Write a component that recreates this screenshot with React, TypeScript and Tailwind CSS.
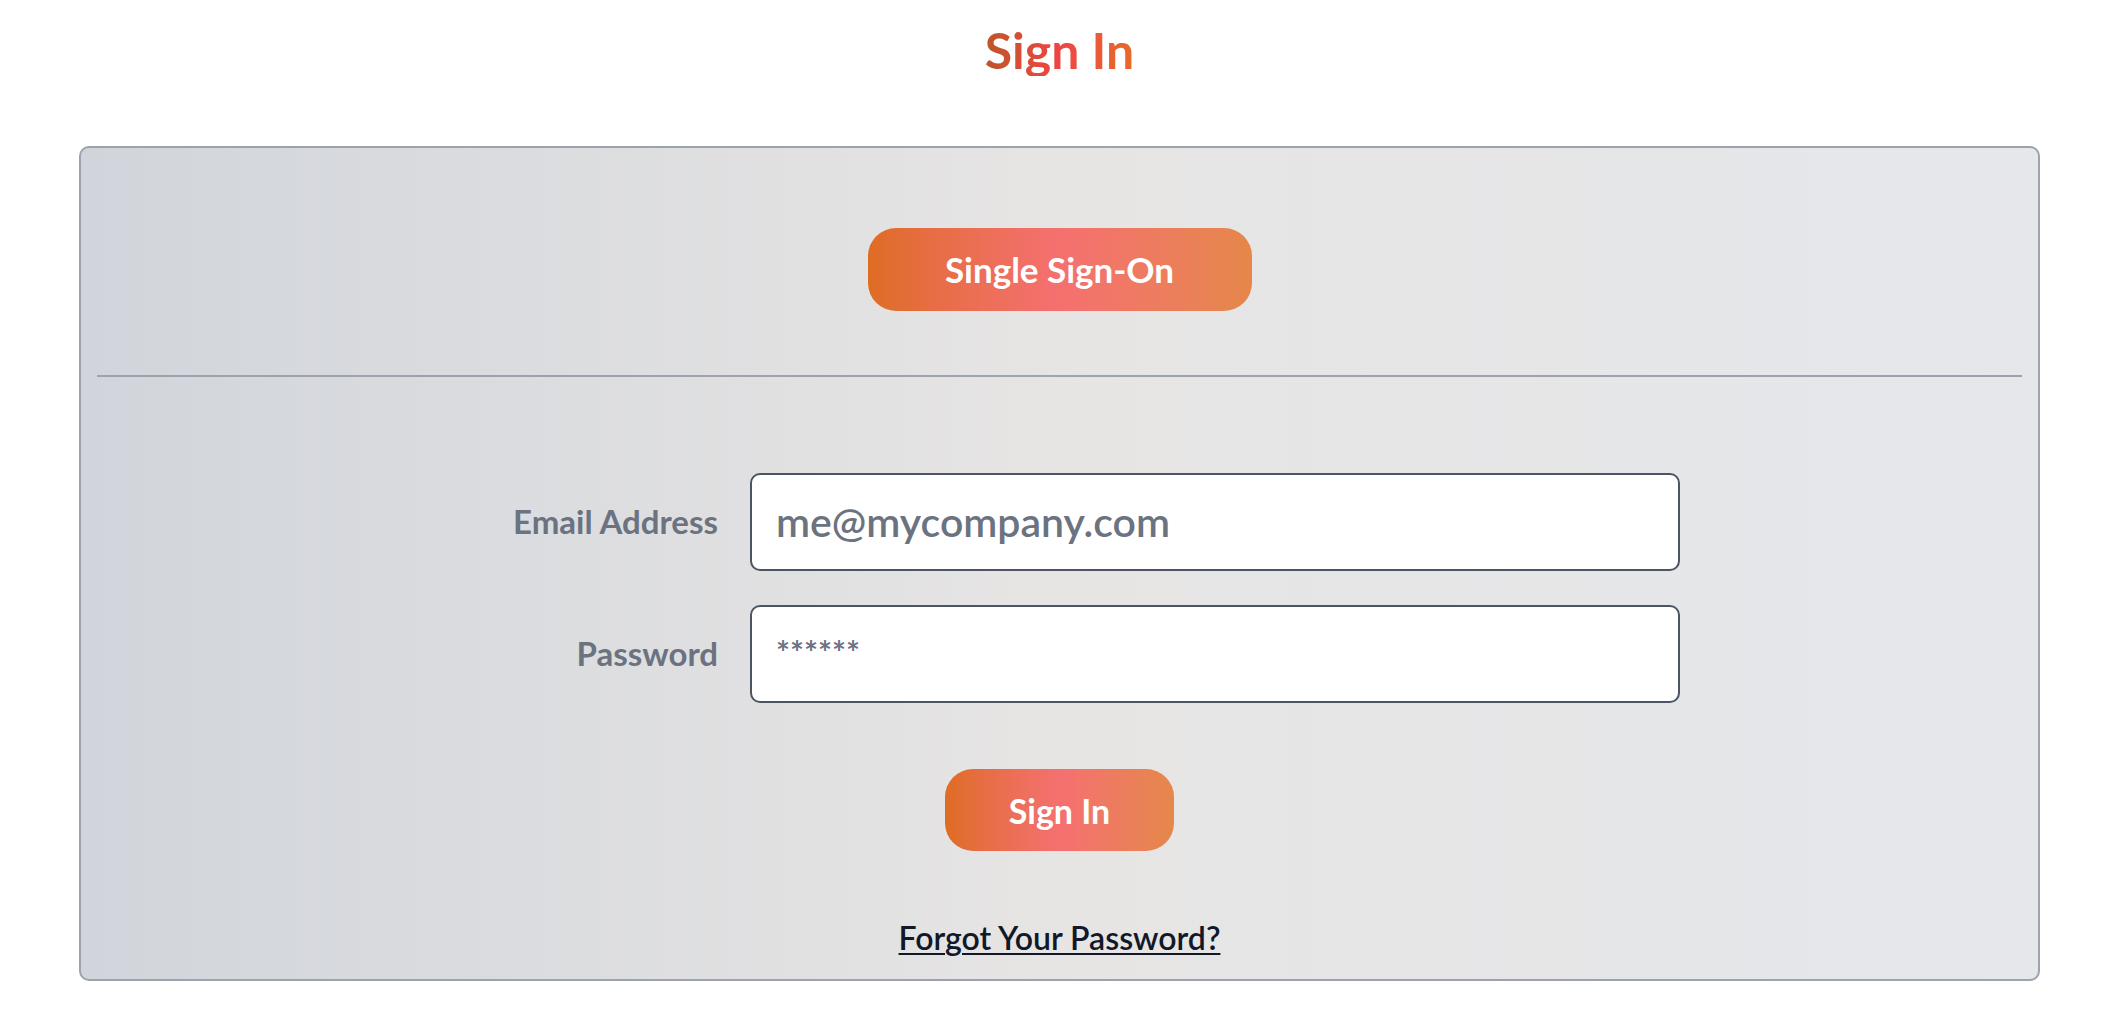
import React from "react";

const font = { fontFamily: "Lato, 'Open Sans', sans-serif" };

export default function App() {
  return (
    <div className="min-h-screen w-full bg-white" style={font}>
      <div className="ml-[79px] w-[1961px] flex flex-col items-center">
        <h1 className="mt-[24px] h-[52px] text-[50px] leading-[52px] font-bold bg-gradient-to-r from-[#bf5428] via-[#ee4444] to-[#e86a25] bg-clip-text text-transparent">
          Sign In
        </h1>
        <div className="mt-[70px] w-full h-[835px] rounded-[10px] border-2 border-[#9ca3af] bg-gradient-to-r from-[#d1d5db] via-[#e7e5e4] to-[#e5e7eb] flex flex-col items-center">
          <button className="mt-[80px] w-[384px] h-[83px] rounded-[28px] bg-gradient-to-r from-[#df6c22] via-[#f57070] to-[#e5874a] text-white text-[35px] font-bold">
            Single Sign-On
          </button>
          <div className="mt-[64px] h-[2px] self-stretch mx-[16px] bg-[#9ca3af]" />
          <div className="mt-[96px] flex flex-col gap-[34px]">
            <div className="flex items-center gap-[32px]">
              <label className="w-[279px] text-right text-[33px] font-bold text-[#6b7280]">
                Email Address
              </label>
              <div className="w-[930px] h-[98px] rounded-[10px] border-2 border-[#4b5563] bg-white flex items-center pl-[24px] text-[41px] font-semibold text-[#6b7280]">
                me@mycompany.com
              </div>
            </div>
            <div className="flex items-center gap-[32px]">
              <label className="w-[279px] text-right text-[33px] font-bold text-[#6b7280]">
                Password
              </label>
              <div className="w-[930px] h-[98px] rounded-[10px] border-2 border-[#4b5563] bg-white flex items-center pl-[24px] pb-[2px] text-[33px] font-bold text-[#6b7280]">
                ******
              </div>
            </div>
          </div>
          <button className="mt-[66px] w-[229px] h-[82px] rounded-[28px] bg-gradient-to-r from-[#df6c22] via-[#f57070] to-[#e5874a] text-white text-[34px] font-bold">
            Sign In
          </button>
          <a
            href="#"
            className="mt-[69px] text-[32px] leading-[36px] font-semibold text-[#111827] underline underline-offset-[3px] decoration-[2px]"
          >
            Forgot Your Password?
          </a>
        </div>
      </div>
    </div>
  );
}
